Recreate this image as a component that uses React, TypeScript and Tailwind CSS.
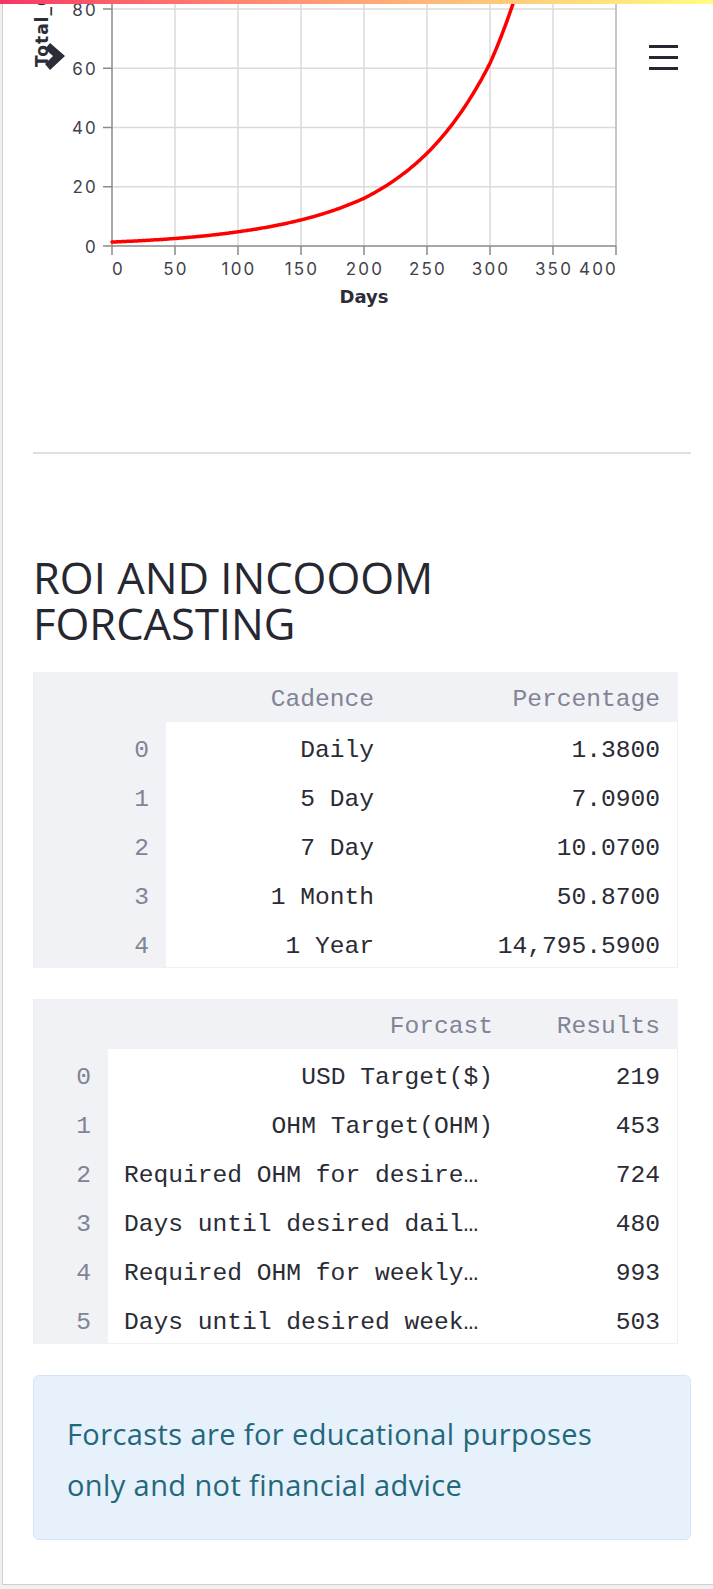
import React from "react";

const X0 = 112;
const XS = 1.26;
const Y0 = 246;
const YS = 2.9625;

const knots: [number, number][] = [
  [0, 1.34],
  [100, 4.8],
  [150, 8.8],
  [200, 16.1],
  [250, 31.3],
  [300, 61.7],
  [320, 84],
  [340, 118],
];

function val(d: number): number {
  for (let i = 0; i < knots.length - 1; i++) {
    const [d0, v0] = knots[i];
    const [d1, v1] = knots[i + 1];
    if (d >= d0 && d <= d1) {
      const t = (d - d0) / (d1 - d0);
      return Math.exp(Math.log(v0) + t * (Math.log(v1) - Math.log(v0)));
    }
  }
  return knots[knots.length - 1][1];
}

const curvePts: string[] = [];
for (let d = 0; d <= 330; d += 1) {
  const x = X0 + d * XS;
  const y = Y0 - val(d) * YS;
  curvePts.push(`${x.toFixed(2)},${y.toFixed(2)}`);
  if (y < -20) break;
}
const curveD = "M" + curvePts.join(" L");

const xTicks = [0, 50, 100, 150, 200, 250, 300, 350, 400];
const yTicks = [0, 20, 40, 60, 80];

function Chart() {
  const labelFont = "Inter, 'DejaVu Sans', sans-serif";
  return (
    <svg
      width={710}
      height={312}
      viewBox="3 0 710 312"
      className="block shrink-0"
    >
      {xTicks.slice(1, -1).map((d) => (
        <line
          key={"vg" + d}
          x1={X0 + d * XS}
          x2={X0 + d * XS}
          y1={-10}
          y2={Y0}
          stroke="#dadada"
          strokeWidth={1.5}
        />
      ))}
      {yTicks.slice(1).map((v) => (
        <line
          key={"hg" + v}
          x1={X0}
          x2={X0 + 400 * XS}
          y1={Y0 - v * YS}
          y2={Y0 - v * YS}
          stroke="#dadada"
          strokeWidth={1.5}
        />
      ))}
      <line x1={616} x2={616} y1={-10} y2={Y0} stroke="#b4b4b4" strokeWidth={1.5} />
      <line x1={X0} x2={X0} y1={-10} y2={Y0} stroke="#8a8a8a" strokeWidth={1.5} />
      <line x1={X0} x2={616} y1={Y0} y2={Y0} stroke="#8a8a8a" strokeWidth={1.5} />
      {yTicks.map((v) => (
        <g key={"yt" + v}>
          <line
            x1={103}
            x2={X0}
            y1={Y0 - v * YS}
            y2={Y0 - v * YS}
            stroke="#8a8a8a"
            strokeWidth={1.5}
          />
          <text
            x={98}
            y={Y0 - v * YS + 6.5}
            textAnchor="end"
            fontFamily={labelFont}
            fontSize={17}
            letterSpacing={2.2}
            fill="#41434c"
          >
            {v}
          </text>
        </g>
      ))}
      {xTicks.map((d, i) => (
        <g key={"xt" + d}>
          <line
            x1={X0 + d * XS}
            x2={X0 + d * XS}
            y1={Y0}
            y2={255}
            stroke="#8a8a8a"
            strokeWidth={1.5}
          />
          <text
            x={i === 0 ? X0 : i === xTicks.length - 1 ? 618 : X0 + d * XS + 1}
            y={274.5}
            textAnchor={i === 0 ? "start" : i === xTicks.length - 1 ? "end" : "middle"}
            fontFamily={labelFont}
            fontSize={17}
            letterSpacing={2.2}
            fill="#41434c"
          >
            {d}
          </text>
        </g>
      ))}
      <path d={curveD} fill="none" stroke="#ff0000" strokeWidth={3.5} strokeLinecap="round" />
      <text
        x={364}
        y={302.5}
        textAnchor="middle"
        fontFamily="'DejaVu Sans', sans-serif"
        fontWeight={700}
        fontSize={18}
        fill="#2c2d36"
      >
        Days
      </text>
      <text
        transform="translate(48,67) rotate(-90)"
        textAnchor="start"
        fontFamily="'DejaVu Sans', sans-serif"
        fontWeight={700}
        fontSize={17}
        letterSpacing={1}
        fill="#2c2d36"
      >
        Total_OHM
      </text>
      <polygon points="50,43 65,56 50,70 45,64 53,56 45,49" fill="#2c2d36" />
    </svg>
  );
}

type Row = { idx: string; cells: { text: string; left?: boolean }[] };

function DataTable({
  widths,
  headers,
  rows,
}: {
  widths: string[];
  headers: string[];
  rows: Row[];
}) {
  return (
    <div className="w-[645px] border border-[#eef0f4] font-['Liberation_Mono','DejaVu_Sans_Mono',monospace] text-[24.6px]">
      <div className="flex h-[49px] bg-[#f0f2f6] text-[#808495]">
        <div className={widths[0]} />
        {headers.map((h, i) => (
          <div
            key={h}
            className={`${widths[i + 1]} flex items-center justify-end pr-[17px] pt-[6px] whitespace-nowrap`}
          >
            {h}
          </div>
        ))}
      </div>
      {rows.map((r) => (
        <div key={r.idx} className="flex h-[49px]">
          <div
            className={`${widths[0]} flex items-center justify-end bg-[#f0f2f6] pr-[17px] pt-[10px] text-[#808495]`}
          >
            {r.idx}
          </div>
          {r.cells.map((c, i) => (
            <div
              key={i}
              className={`${widths[i + 1]} flex items-center overflow-hidden whitespace-nowrap bg-white pt-[10px] text-[#2a2b35] ${
                c.left ? "justify-start pl-[16px]" : "justify-end pr-[17px]"
              }`}
            >
              {c.text}
            </div>
          ))}
        </div>
      ))}
    </div>
  );
}

export default function App() {
  return (
    <div className="relative h-[1589px] w-full overflow-hidden bg-[#f0f0f0]">
      <div className="ml-[2px] flex h-[1585px] flex-col border-b border-l border-[#cfcfcf] bg-white">
        <Chart />
        <div className="flex flex-col pl-[30px] pr-[22px]">
          <div className="mt-[140px] h-[2px] bg-[#e0e0e0]" />
          <h2 className="mt-[101px] font-['Open_Sans',sans-serif] text-[43.5px] font-normal leading-[46px] text-[#262730]">
            ROI AND INCOOOM
            <br />
            FORCASTING
          </h2>
          <div className="mt-[25px]">
            <DataTable
              widths={["w-[132px]", "w-[225px]", "w-[286px]"]}
              headers={["Cadence", "Percentage"]}
              rows={[
                { idx: "0", cells: [{ text: "Daily" }, { text: "1.3800" }] },
                { idx: "1", cells: [{ text: "5 Day" }, { text: "7.0900" }] },
                { idx: "2", cells: [{ text: "7 Day" }, { text: "10.0700" }] },
                { idx: "3", cells: [{ text: "1 Month" }, { text: "50.8700" }] },
                { idx: "4", cells: [{ text: "1 Year" }, { text: "14,795.5900" }] },
              ]}
            />
          </div>
          <div className="mt-[31px]">
            <DataTable
              widths={["w-[74px]", "w-[402px]", "w-[167px]"]}
              headers={["Forcast", "Results"]}
              rows={[
                { idx: "0", cells: [{ text: "USD Target($)" }, { text: "219" }] },
                { idx: "1", cells: [{ text: "OHM Target(OHM)" }, { text: "453" }] },
                { idx: "2", cells: [{ text: "Required OHM for desire…", left: true }, { text: "724" }] },
                { idx: "3", cells: [{ text: "Days until desired dail…", left: true }, { text: "480" }] },
                { idx: "4", cells: [{ text: "Required OHM for weekly…", left: true }, { text: "993" }] },
                { idx: "5", cells: [{ text: "Days until desired week…", left: true }, { text: "503" }] },
              ]}
            />
          </div>
          <div className="mt-[31px] rounded-[6px] border border-[#d3e6f8] bg-[#e7f1fc] px-[33px] pb-[29px] pt-[32px] font-['Open_Sans',sans-serif] text-[29px] leading-[51px] tracking-[0.4px] text-[#22687a]">
            Forcasts are for educational purposes
            <br />
            only and not financial advice
          </div>
        </div>
      </div>
      <div className="absolute left-0 top-0 h-[4px] w-full bg-linear-to-r from-[#f63366] to-[#fffd80]" />
      <div className="absolute left-[649px] top-[45px] flex flex-col gap-[8px]">
        <div className="h-[3px] w-[29px] bg-[#262730]" />
        <div className="h-[3px] w-[29px] bg-[#262730]" />
        <div className="h-[3px] w-[29px] bg-[#262730]" />
      </div>
    </div>
  );
}
